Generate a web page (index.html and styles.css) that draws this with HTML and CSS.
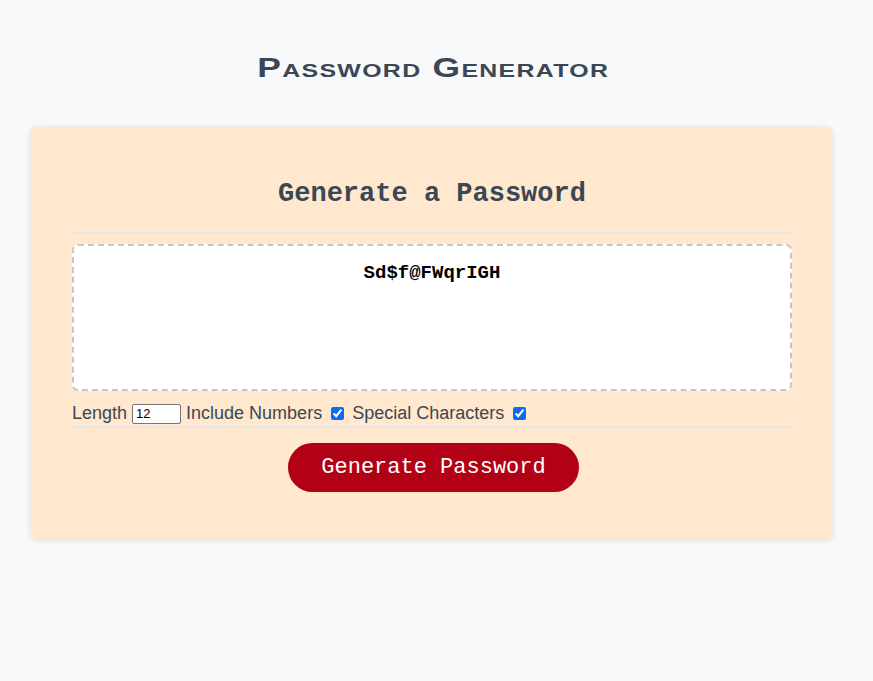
FILE: index.html
```html
<!DOCTYPE html>
<html lang="en">
<head>
<meta charset="utf-8">
<title>Password Generator</title>
<link rel="stylesheet" href="styles.css">
</head>
<body>
  <div class="wrapper">
    <header class="site-header">
      <h1 class="site-title"><span class="site-title-text">Password Generator</span></h1>
    </header>
    <div class="card">
      <h2 class="card-title">Generate a Password</h2>
      <hr class="rule">
      <div class="card-body">
        <textarea readonly class="password" aria-label="Generated Password">Sd$f@FWqrIGH</textarea>
      </div>
      <div class="options">
        <label>Length</label>
        <input class="len" type="text" value="12">
        <label>Include Numbers</label>
        <input class="chk" type="checkbox" checked>
        <label>Special Characters</label>
        <input class="chk" type="checkbox" checked>
      </div>
      <hr class="rule rule-light">
      <div class="card-footer">
        <button class="btn">Generate Password</button>
      </div>
    </div>
  </div>
</body>
</html>
```
FILE: styles.css
```css
* { box-sizing: border-box; }
html, body { margin: 0; padding: 0; }
body {
  background: #f8f9fb;
  font-family: "Liberation Sans", Arial, sans-serif;
  color: #3b4753;
}
.wrapper {
  padding: 0 41px 40px 31px;
}
.site-header {
  padding-top: 52px;
  height: 127px;
  text-align: center;
}
.site-title {
  margin: 0;
  font-family: "Liberation Sans", Arial, sans-serif;
  font-weight: bold;
  font-size: 27px;
  line-height: 32px;
  color: #3b4753;
}
.site-title-text {
  display: inline-block;
  font-variant: small-caps;
  letter-spacing: 1px;
  transform: scaleX(1.31);
  margin-left: 4px;
}
.card {
  background: #ffe8cd;
  border-radius: 5px;
  box-shadow: 0 1px 6px rgba(0,0,0,0.12);
  padding: 51px 40px 47px 41px;
}
.card-title {
  margin: 0;
  text-align: center;
  font-family: "Liberation Mono", "Courier New", monospace;
  font-weight: bold;
  font-size: 27px;
  line-height: 32px;
  color: #3b4753;
}
.rule {
  margin: 22px 0 0;
  border: 0;
  height: 2px;
  background: #ebe6df;
}
.rule-light {
  margin-top: 2px;
  height: 2px;
  background: #e4e6e8;
}
.card-body {
  margin-top: 10px;
}
.password {
  display: block;
  width: 100%;
  height: 147px;
  resize: none;
  border: 2px dashed #c3c6ca;
  border-radius: 6px;
  background: #fff;
  text-align: center;
  font-family: "Liberation Mono", "Courier New", monospace;
  font-weight: bold;
  font-size: 19px;
  line-height: 22px;
  padding: 16px 10px;
  color: #000;
  outline: none;
}
.options {
  margin-top: 12px;
  display: flex;
  align-items: center;
  height: 21px;
  font-size: 18px;
  color: #3b4753;
}
.options label { white-space: nowrap; }
.len {
  width: 49px;
  height: 20px;
  margin: 0 5px 0 5px;
  padding: 1px 3px;
  border: 1px solid #767676;
  border-radius: 2px;
  font-family: "Liberation Sans", Arial, sans-serif;
  font-size: 13px;
  color: #000;
  background: #fff;
}
.chk {
  width: 13px;
  height: 13px;
  margin: 0 8px 0 9px;
  accent-color: #0a6cf5;
}
.card-footer {
  margin-top: 15px;
  text-align: center;
  padding-left: 3px;
}
.btn {
  width: 291px;
  height: 49px;
  border: 0;
  border-radius: 25px;
  background: #b20015;
  color: #fff;
  font-family: "Liberation Mono", "Courier New", monospace;
  font-size: 22px;
  cursor: pointer;
}
```
